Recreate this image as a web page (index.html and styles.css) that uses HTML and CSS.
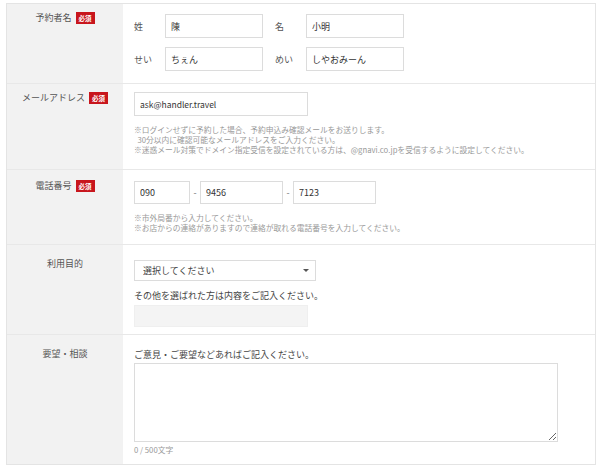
FILE: index.html
```html
<!DOCTYPE html>
<html lang="ja">
<head>
    <meta charset="UTF-8">
    <title>予約者情報</title>
    <link rel="stylesheet" href="styles.css">
</head>
<body>

    <div class="form">
        <div class="row row-name">
            <div class="label label-top">予約者名<span class="req">必須</span></div>
            <div class="field">
                <div class="pair">
                    <span class="sub">姓</span><input class="text name" type="text" value="陳">
                    <span class="sub sub-gap">名</span><input class="text name" type="text" value="小明">
                </div>
                <div class="pair">
                    <span class="sub">せい</span><input class="text name" type="text" value="ちぇん">
                    <span class="sub sub-gap">めい</span><input class="text name" type="text" value="しやおみーん">
                </div>
            </div>
        </div>

        <div class="row row-mail">
            <div class="label label-top">メールアドレス<span class="req">必須</span></div>
            <div class="field">
                <input class="text mail" type="text" value="ask@handler.travel">
                <div class="notes">
                    <p>※ログインせずに予約した場合、予約申込み確認メールをお送りします。<br>&nbsp;&nbsp;30分以内に確認可能なメールアドレスをご入力ください。</p>
                    <p>※迷惑メール対策でドメイン指定受信を設定されている方は、@gnavi.co.jpを受信するように設定してください。</p>
                </div>
            </div>
        </div>

        <div class="row row-tel">
            <div class="label label-tel">電話番号<span class="req">必須</span></div>
            <div class="field">
                <div class="tel">
                    <input class="text tel-1" type="text" value="090">
                    <span class="dash">-</span>
                    <input class="text tel-2" type="text" value="9456">
                    <span class="dash">-</span>
                    <input class="text tel-3" type="text" value="7123">
                </div>
                <div class="notes">
                    <p>※市外局番から入力してください。</p>
                    <p>※お店からの連絡がありますので連絡が取れる電話番号を入力してください。</p>
                </div>
            </div>
        </div>

        <div class="row row-purpose">
            <div class="label label-low">利用目的</div>
            <div class="field">
                <span class="select-wrap">
                    <select class="select">
                        <option>選択してください</option>
                    </select>
                </span>
                <p class="hint">その他を選ばれた方は内容をご記入ください。</p>
                <div class="other"></div>
            </div>
        </div>

        <div class="row row-request">
            <div class="label label-low">要望・相談</div>
            <div class="field">
                <p class="hint hint-first">ご意見・ご要望などあればご記入ください。</p>
                <textarea class="memo"></textarea>
                <p class="count">0 / 500文字</p>
            </div>
        </div>
    </div>

</body>
</html>
```

FILE: styles.css
```css
body {
    margin: 0;
    padding: 3px 4px 0 6px;
    background-color: #fff;
    color: #444;
    font-family: "Noto Sans CJK JP", "Noto Sans", sans-serif;
    font-size: 9px;
}
p {
    margin: 0;
}
.form {
    width: 588px;
    border: 1px solid #e4e4e4;
}
.row {
    display: grid;
    grid-template-columns: 116px 1fr;
    border-bottom: 1px solid #e8e8e8;
}
.row:last-child {
    border-bottom: none;
}
.label {
    background-color: #f2f2f2;
    color: #555;
    text-align: center;
    line-height: 12px;
    padding-top: 8px;
}
.label-tel {
    padding-top: 10px;
}
.label-low {
    padding-top: 13px;
}
.req {
    display: inline-block;
    margin-left: 4px;
    padding: 0 3px;
    height: 12px;
    line-height: 12px;
    background-color: #c8161d;
    color: #fff;
    font-size: 6.5px;
    font-weight: bold;
    vertical-align: top;
}
.field {
    padding-left: 11px;
}
.row-name .field {
    padding-top: 10px;
    padding-bottom: 12px;
}
.row-mail .field {
    padding-top: 8px;
    padding-bottom: 14px;
}
.row-tel .field {
    padding-top: 11px;
    padding-bottom: 11px;
}
.row-purpose .field {
    padding-top: 15px;
    padding-bottom: 7px;
}
.row-request .field {
    padding-top: 14px;
    padding-bottom: 9px;
}
.text {
    box-sizing: border-box;
    height: 24px;
    border: 1px solid #dcdcdc;
    padding: 0 5px;
    color: #333;
    font-family: "Noto Sans CJK JP", "Noto Sans", sans-serif;
    font-size: 9px;
    outline: none;
    margin: 0;
}
.pair {
    display: flex;
    align-items: center;
}
.pair + .pair {
    margin-top: 9px;
}
.sub {
    width: 31px;
    color: #555;
}
.sub-gap {
    margin-left: 12px;
}
.name {
    width: 98px;
}
.mail {
    display: block;
    width: 174px;
    font-size: 8.5px;
}
.notes {
    margin-top: 9px;
    color: #999;
    font-size: 7.75px;
    line-height: 10px;
}
.tel {
    display: flex;
    align-items: center;
}
.tel .text {
    height: 23px;
}
.tel-1 {
    width: 56px;
}
.tel-2, .tel-3 {
    width: 83px;
}
.dash {
    width: 10px;
    text-align: center;
    color: #777;
}
.select-wrap {
    position: relative;
    display: block;
    width: 182px;
}
.select-wrap::after {
    content: "";
    position: absolute;
    right: 7px;
    top: 9px;
    border-left: 3px solid transparent;
    border-right: 3px solid transparent;
    border-top: 3px solid #555;
}
.select {
    appearance: none;
    -webkit-appearance: none;
    box-sizing: border-box;
    display: block;
    width: 182px;
    height: 21px;
    border: 1px solid #dcdcdc;
    border-radius: 0;
    background-color: #fff;
    padding: 0 8px;
    color: #444;
    font-family: "Noto Sans CJK JP", "Noto Sans", sans-serif;
    font-size: 9px;
    margin: 0;
}
.hint {
    margin-top: 9px;
    line-height: 12px;
    color: #444;
}
.hint-first {
    margin-top: 0;
}
.other {
    box-sizing: border-box;
    width: 174px;
    height: 22px;
    margin-top: 3px;
    background-color: #f4f4f4;
    border: 1px solid #efefef;
}
.memo {
    box-sizing: border-box;
    display: block;
    width: 424px;
    height: 79px;
    margin: 2px 0 0;
    border: 1px solid #dcdcdc;
    outline: none;
}
.count {
    margin-top: 3px;
    color: #999;
    font-size: 7.75px;
    line-height: 10px;
}
```
